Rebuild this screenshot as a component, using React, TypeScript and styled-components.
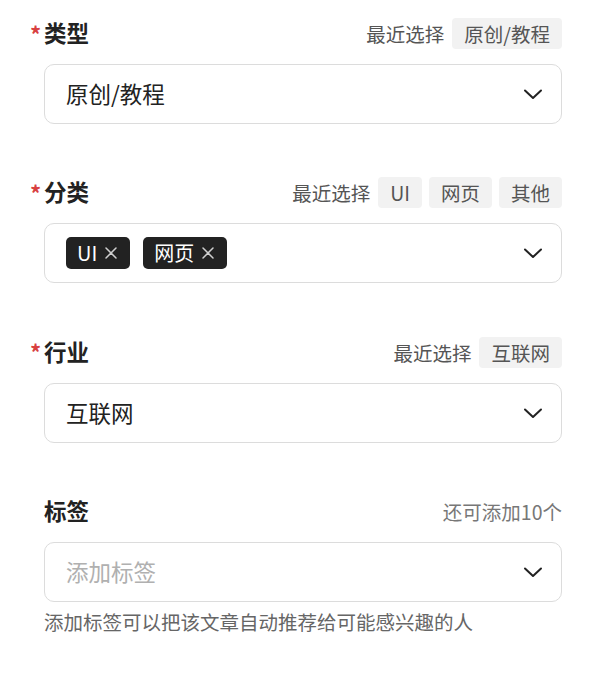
import styled, { createGlobalStyle } from 'styled-components'

const GlobalStyle = createGlobalStyle`
  body {
    margin: 0;
    background: #ffffff;
    font-family: "Noto Sans CJK SC", "Noto Sans", sans-serif;
    color: #222222;
  }
`

const Page = styled.div`
  display: flex;
  flex-direction: column;
  gap: 53.4px;
  padding: 18px 38px 0 44px;
`

const Field = styled.div`
  display: flex;
  flex-direction: column;
`

const LabelRow = styled.div`
  display: flex;
  align-items: center;
  justify-content: space-between;
  height: 31px;
  margin-bottom: 15px;
`

const Label = styled.div`
  display: flex;
  align-items: center;
  font-size: 22.5px;
  font-weight: 700;
  line-height: 31px;
  color: #222;
  padding-bottom: 2px;
`

const Required = styled.span`
  width: 14px;
  margin-left: -14px;
  color: #d8403f;
  font-size: 22px;
  font-weight: 700;
  line-height: 1;
`

const Recent = styled.div`
  display: flex;
  align-items: center;
  gap: 7px;
`

const RecentText = styled.span`
  font-size: 19.5px;
  color: #555;
  margin-right: 1px;
`

const Chip = styled.span`
  display: inline-flex;
  align-items: center;
  height: 31px;
  padding: 0 12px;
  border-radius: 4px;
  background: #f2f2f2;
  font-size: 19.5px;
  color: #555;
`

const Hint = styled.span`
  font-size: 19.5px;
  color: #777;
`

const Select = styled.div`
  display: flex;
  align-items: center;
  height: 60px;
  box-sizing: border-box;
  padding: 0 14px 0 21px;
  border: 1.5px solid #dcdcdc;
  border-radius: 10px;
`

const Value = styled.div<{ $placeholder?: boolean }>`
  flex: 1;
  display: flex;
  align-items: center;
  gap: 13px;
  font-size: 22.5px;
  line-height: 32px;
  padding-bottom: 2px;
  color: ${({ $placeholder }) => ($placeholder ? '#b0b0b0' : '#222')};
`

const Tag = styled.span`
  display: inline-flex;
  align-items: center;
  gap: 8px;
  height: 32px;
  margin-bottom: -2px;
  padding: 0 13px 0 11px;
  border-radius: 5px;
  background: #222;
  color: #fff;
  font-size: 20px;
`

const TagClose = styled.svg`
  width: 12px;
  height: 12px;
  stroke: #cfcfcf;
  stroke-width: 1.5;
`

const Chevron = styled.svg`
  width: 22px;
  height: 22px;
  stroke: #222;
  stroke-width: 2;
  fill: none;
  margin-right: 3px;
`

const Help = styled.div`
  margin-top: 5px;
  font-size: 19.5px;
  color: #666;
`

const ChevronDown = () => (
  <Chevron viewBox="0 0 22 22">
    <path d="M3 7.5 L11 15 L19 7.5" strokeLinecap="round" strokeLinejoin="round" />
  </Chevron>
)

const CloseIcon = () => (
  <TagClose viewBox="0 0 12 12">
    <path d="M1 1 L11 11 M11 1 L1 11" strokeLinecap="round" />
  </TagClose>
)

function RecentChips({ items }: { items: string[] }) {
  return (
    <Recent>
      <RecentText>最近选择</RecentText>
      {items.map((item) => (
        <Chip key={item}>{item}</Chip>
      ))}
    </Recent>
  )
}

export default function App() {
  return (
    <>
      <GlobalStyle />
      <Page>
        <Field>
          <LabelRow>
            <Label>
              <Required>*</Required>类型
            </Label>
            <RecentChips items={['原创/教程']} />
          </LabelRow>
          <Select>
            <Value>原创/教程</Value>
            <ChevronDown />
          </Select>
        </Field>

        <Field>
          <LabelRow>
            <Label>
              <Required>*</Required>分类
            </Label>
            <RecentChips items={['UI', '网页', '其他']} />
          </LabelRow>
          <Select>
            <Value>
              <Tag>
                UI
                <CloseIcon />
              </Tag>
              <Tag>
                网页
                <CloseIcon />
              </Tag>
            </Value>
            <ChevronDown />
          </Select>
        </Field>

        <Field>
          <LabelRow>
            <Label>
              <Required>*</Required>行业
            </Label>
            <RecentChips items={['互联网']} />
          </LabelRow>
          <Select>
            <Value>互联网</Value>
            <ChevronDown />
          </Select>
        </Field>

        <Field>
          <LabelRow>
            <Label>标签</Label>
            <Hint>还可添加10个</Hint>
          </LabelRow>
          <Select>
            <Value $placeholder>添加标签</Value>
            <ChevronDown />
          </Select>
          <Help>添加标签可以把该文章自动推荐给可能感兴趣的人</Help>
        </Field>
      </Page>
    </>
  )
}
